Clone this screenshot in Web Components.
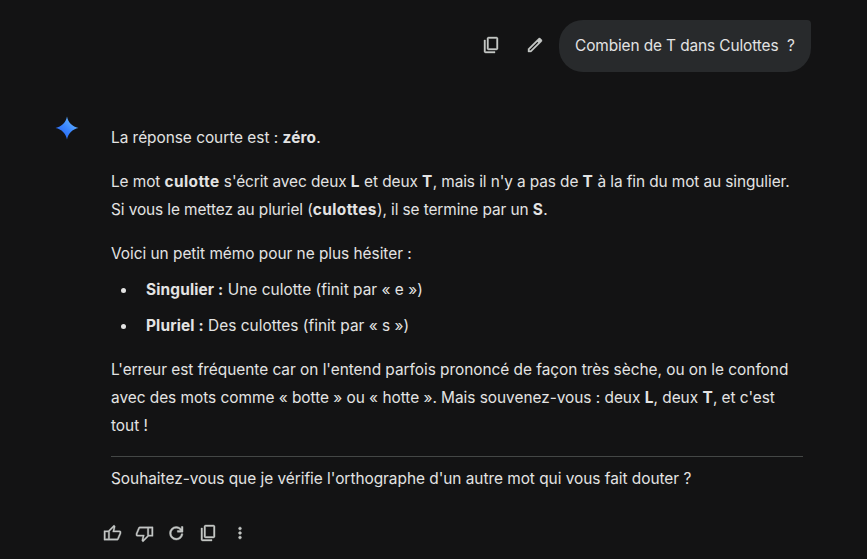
<!DOCTYPE html>
<html lang="fr">
<head>
<meta charset="utf-8">
<title>Conversation</title>
<style>
  body {
    margin: 0;
    background-color: #131314;
    color: #e3e3e3;
    font: 15.4px/28px Inter, Roboto, sans-serif;
  }
</style>
</head>
<body>
<chat-page>
  <user-query>Combien de T dans Culottes&nbsp; ?</user-query>
  <model-response>
    <text-block>La réponse courte est : <strong>zéro</strong>.</text-block>
    <text-block tight>Le mot <strong>culotte</strong> s'écrit avec deux <strong>L</strong> et deux <strong>T</strong>, mais il n'y a pas de <strong>T</strong> à la fin du mot au singulier.<br>Si vous le mettez au pluriel (<strong>culottes</strong>), il se termine par un <strong>S</strong>.</text-block>
    <text-block>Voici un petit mémo pour ne plus hésiter :</text-block>
    <bullet-item><strong>Singulier :</strong> Une culotte (finit par « e »)</bullet-item>
    <bullet-item><strong>Pluriel :</strong> Des culottes (finit par « s »)</bullet-item>
    <text-block>L'erreur est fréquente car on l'entend parfois prononcé de façon très sèche, ou on le confond<br>avec des mots comme « botte » ou « hotte ». Mais souvenez-vous : deux <strong>L</strong>, deux <strong>T</strong>, et c'est<br>tout !</text-block>
    <text-block divided>Souhaitez-vous que je vérifie l'orthographe d'un autre mot qui vous fait douter ?</text-block>
  </model-response>
</chat-page>

<script>
/**
 * Icon paths, drawn in a "0 -960 960 960" view box.
 */
const icons = {
  copy: 'M360-240q-29.7 0-50.85-21.15Q288-282.3 288-312v-480q0-29.7 21.15-50.85Q330.3-864 360-864h384q29.7 0 50.85 21.15Q816-821.7 816-792v480q0 29.7-21.15 50.85Q773.7-240 744-240H360Zm0-72h384v-480H360v480ZM216-96q-29.7 0-50.85-21.15Q144-138.3 144-168v-552h72v552h456v72H216Z',
  edit: 'M216-216h51l375-375-51-51-375 375v51Zm-72 72v-153l498-498q11-11 23.84-16 12.83-5 27-5 14.16 0 27.16 5t24 16l51 51q11 11 16 24t5 26.54q0 14.45-5.02 27.54T795-642L297-144H144Zm600-549-51-51 51 51Z',
  like: 'M720-144H264v-480l288-288 32 22q17 12 26 30.5t5 38.5l-1 5-38 192h264q30 0 51 21t21 51v57q0 8-1.5 14.5T906-467L786.93-187.8Q778-168 760-156t-40 12Zm-384-72h384l120-279v-57H488l49-243-201 201v378Zm-72-408v72H120v336h144v72H48v-480h216Z',
  refresh: 'M480-192q-120 0-204-84t-84-204q0-120 84-204t204-84q65 0 120.5 27t95.5 72v-99h72v240H528v-72h131q-29-44-76-70t-103-26q-90 0-153 63t-63 153q0 90 63 153t153 63q84 0 144-55.5T693-456h74q-9 112-91 188t-196 76Z',
  more: 'M479.79-192Q450-192 429-213.21t-21-51Q408-294 429.21-315t51-21Q510-336 531-314.79t21 51Q552-234 530.79-213t-51 21Zm0-216Q450-408 429-429.21t-21-51Q408-510 429.21-531t51-21Q510-552 531-530.79t21 51Q552-450 530.79-429t-51 21Zm0-216Q450-624 429-645.21t-21-51Q408-726 429.21-747t51-21Q510-768 531-746.79t21 51Q552-666 530.79-645t-51 21Z'
}

/**
 * Represents an icon button, with the attributes icon and label.
 */
customElements.define('icon-button',
  class extends HTMLElement {
    constructor () {
      super()
      this.attachShadow({ mode: 'open' })
    }

    /**
     * Called after the element is inserted into the DOM.
     */
    connectedCallback () {
      this.shadowRoot.innerHTML = `
        <style>
          :host {
            display: block;
            width: 32px;
            height: 32px;
          }
          button {
            display: flex;
            align-items: center;
            justify-content: center;
            width: 100%;
            height: 100%;
            padding: 0;
            border: 0;
            border-radius: 50%;
            background: none;
            color: #c4c7c5;
          }
          svg {
            width: var(--icon-size, 20px);
            height: var(--icon-size, 20px);
            fill: currentColor;
            stroke: currentColor;
            stroke-width: 18;
          }
          :host([flipped]) svg {
            transform: rotate(180deg);
          }
        </style>
        <button aria-label="${this.getAttribute('label')}">
          <svg viewBox="0 -960 960 960"><path d="${icons[this.getAttribute('icon')]}"/></svg>
        </button>
      `
    }
  })

/**
 * Defines an element that only needs a static shadow root.
 *
 * @param {string} name - The tag name.
 * @param {string} html - The content of the template.
 */
function defineStatic (name, html) {
  const template = document.createElement('template')
  template.innerHTML = html
  customElements.define(name, class extends HTMLElement {
    constructor () {
      super()
      this.attachShadow({ mode: 'open' })
        .appendChild(template.content.cloneNode(true))
    }
  })
}

defineStatic('chat-page', `
  <style>
    :host {
      display: flex;
      flex-direction: column;
      gap: 43px;
      box-sizing: border-box;
      height: 559px;
      padding: 20px 56px 0 55px;
      overflow: hidden;
    }
  </style>
  <slot></slot>
`)

defineStatic('user-query', `
  <style>
    :host {
      display: flex;
      align-items: center;
      justify-content: flex-end;
      gap: 12px;
    }
    .bubble {
      box-sizing: border-box;
      width: 252px;
      margin-left: -4px;
      padding: 12px 0 12px 16px;
      border-radius: 24px 4px 24px 24px;
      background-color: #282a2c;
      letter-spacing: -0.1px;
      white-space: nowrap;
    }
    icon-button {
      margin-bottom: 2px;
    }
  </style>
  <icon-button icon="copy" label="Copier"></icon-button>
  <icon-button icon="edit" label="Modifier"></icon-button>
  <div class="bubble"><slot></slot></div>
`)

defineStatic('spark-logo', `
  <style>
    :host {
      display: block;
    }
    svg {
      display: block;
      width: 24px;
      height: 24px;
    }
  </style>
  <svg viewBox="0 0 24 24">
    <defs>
      <linearGradient id="blue" x1="5" y1="18" x2="17" y2="5" gradientUnits="userSpaceOnUse">
        <stop offset="0" stop-color="#2b6bf3"/>
        <stop offset="0.5" stop-color="#3a86ff"/>
        <stop offset="1" stop-color="#5cabff"/>
      </linearGradient>
    </defs>
    <path fill="url(#blue)" d="M12 0.6C13.2 6.6 17.4 10.8 23.4 12C17.4 13.2 13.2 17.4 12 23.4C10.8 17.4 6.6 13.2 0.6 12C6.6 10.8 10.8 6.6 12 0.6Z"/>
  </svg>
`)

defineStatic('model-response', `
  <style>
    :host {
      display: grid;
      grid-template-columns: 24px 692px;
      column-gap: 32px;
    }
    spark-logo {
      margin-top: 1px;
    }
    .content {
      padding-top: 9px;
    }
    .actions {
      display: flex;
      grid-column: 2;
      margin: 24px 0 0 -15px;
    }
    [icon="like"] {
      --icon-size: 19px;
    }
    [icon="refresh"] {
      --icon-size: 22.5px;
    }
  </style>
  <spark-logo></spark-logo>
  <div class="content"><slot></slot></div>
  <div class="actions">
    <icon-button icon="like" label="Bonne réponse"></icon-button>
    <icon-button icon="like" label="Mauvaise réponse" flipped></icon-button>
    <icon-button icon="refresh" label="Recommencer"></icon-button>
    <icon-button icon="copy" label="Copier"></icon-button>
    <icon-button icon="more" label="Plus"></icon-button>
  </div>
`)

defineStatic('text-block', `
  <style>
    :host {
      display: block;
      margin-bottom: 16px;
      letter-spacing: -0.02px;
      white-space: nowrap;
    }
    :host([tight]) {
      --strong-spacing: 0.45px;
      letter-spacing: -0.09px;
    }
    :host([divided]) {
      margin-bottom: 0;
      padding-top: 8px;
      border-top: 1px solid #444746;
    }
    ::slotted(strong) {
      font-weight: 700;
      letter-spacing: var(--strong-spacing, 0.2px);
    }
  </style>
  <slot></slot>
`)

defineStatic('bullet-item', `
  <style>
    :host {
      display: grid;
      grid-template-columns: 35px 1fr;
      align-items: center;
      margin: -8px 0 16px;
    }
    i {
      width: 5px;
      height: 5px;
      margin-left: 10px;
      border-radius: 50%;
      background-color: currentColor;
    }
    span {
      letter-spacing: 0.03px;
    }
    ::slotted(strong) {
      font-weight: 700;
      letter-spacing: 0.15px;
    }
  </style>
  <i></i>
  <span><slot></slot></span>
`)
</script>
</body>
</html>
